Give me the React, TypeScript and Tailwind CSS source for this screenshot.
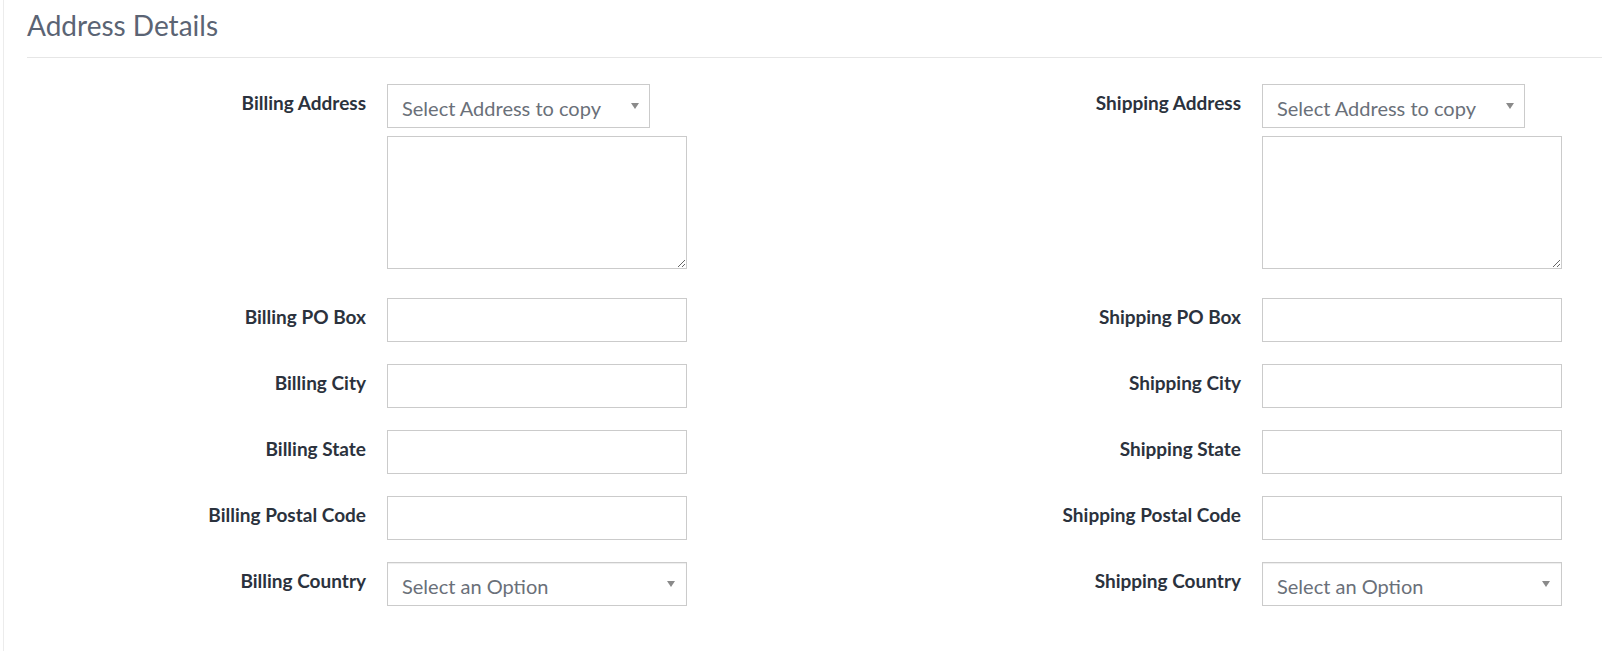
import React from 'react';

const Caret: React.FC = () => (
    <svg width="8" height="6" viewBox="0 0 8 6" className="shrink-0">
        <path d="M0 0h8L4 6z" fill="#8a8a8a" />
    </svg>
);

const FakeSelect: React.FC<{ text: string; className?: string }> = ({ text, className }) => (
    <div className={`flex h-[44px] items-center justify-between border border-[#cbcbcb] bg-white pl-[14px] pr-[10px] ${className ?? ''}`}>
        <span className="pt-[3px] text-[20px] leading-[24px] font-normal text-[#6a7079]">{text}</span>
        <Caret />
    </div>
);

const FieldRow: React.FC<{ label: string; children: React.ReactNode; spacing?: string }> = ({ label, children, spacing }) => (
    <div className={`flex items-start ${spacing ?? 'mb-[22px]'}`}>
        <label className="w-[339px] shrink-0 pt-[7px] text-right text-[19px] leading-[24px] font-bold text-[#2b323d]">{label}</label>
        <div className="ml-[21px] w-[300px] shrink-0">{children}</div>
    </div>
);

const TextInput: React.FC = () => (
    <input type="text" className="block h-[44px] w-full border border-[#cbcbcb] bg-white px-3 outline-none" />
);

const AddressColumn: React.FC<{ prefix: string; className?: string }> = ({ prefix, className }) => (
    <div className={className}>
        <FieldRow label={`${prefix} Address`} spacing="mb-[29px]">
            <FakeSelect text="Select Address to copy" className="w-[263px]" />
            <textarea className="mt-[8px] block h-[133px] w-full border border-[#cbcbcb] bg-white outline-none" />
        </FieldRow>
        <FieldRow label={`${prefix} PO Box`}><TextInput /></FieldRow>
        <FieldRow label={`${prefix} City`}><TextInput /></FieldRow>
        <FieldRow label={`${prefix} State`}><TextInput /></FieldRow>
        <FieldRow label={`${prefix} Postal Code`}><TextInput /></FieldRow>
        <FieldRow label={`${prefix} Country`}>
            <FakeSelect text="Select an Option" className="w-full pr-[11px] shadow-[inset_0_1px_1px_rgba(0,0,0,0.075)]" />
        </FieldRow>
    </div>
);

const App: React.FC = () => {
    return (
        <div className="min-h-screen overflow-hidden bg-white pl-[3px] font-['Lato','Liberation_Sans',sans-serif]">
            <div className="min-h-screen border-l border-[#ececec] pl-[23px] pt-[8px]">
                <h2 className="border-b border-[#e6e6e6] pb-[15px] text-[28px] leading-[34px] font-normal text-[#5b6474]">
                    Address Details
                </h2>
                <div className="flex pt-[26px]">
                    <AddressColumn prefix="Billing" className="w-[875px] shrink-0" />
                    <AddressColumn prefix="Shipping" className="flex-1" />
                </div>
            </div>
        </div>
    );
};

export default App;
